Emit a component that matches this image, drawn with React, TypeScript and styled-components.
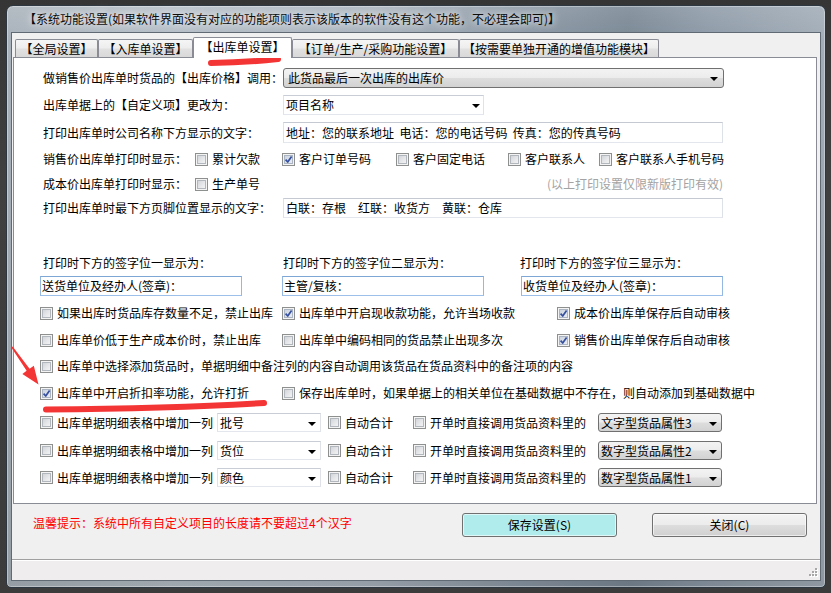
import React from "react";
import styled, { createGlobalStyle } from "styled-components";

const GlobalStyle = createGlobalStyle`
  html, body { margin: 0; padding: 0; }
  body {
    background: #3b3b3b;
    font-family: "Noto Sans CJK SC", "Noto Sans", sans-serif;
    font-size: 12px;
    color: #000;
  }
  * { box-sizing: border-box; }
`;

const Screen = styled.div`
  position: relative;
  width: 831px;
  height: 593px;
  overflow: hidden;
  background: linear-gradient(#353535, #404040 30%, #3b3b3b);
  padding: 5px 0 0 6px;
`;

const Window = styled.div`
  width: 820px;
  height: 583px;
  border-radius: 7px 7px 5px 5px;
  border: 1px solid #2d3741;
  background: linear-gradient(180deg, rgba(255, 255, 255, 0.12), rgba(0, 0, 0, 0) 6%, rgba(0, 0, 0, 0.12) 100%),
    linear-gradient(90deg, #a9b2bb 0%, #b4bdc6 20%, #a8b2bc 45%, #8c99a6 62%, #7a8895 76%, #8e9ba8 86%, #a2adb8 100%);
  box-shadow: inset 0 0 0 1px rgba(255, 255, 255, 0.35);
  padding: 0 4px 6px 4px;
  display: flex;
  flex-direction: column;
`;

const TitleBar = styled.div`
  height: 26px;
  flex: none;
  display: flex;
  align-items: center;
  padding-left: 13px;
  white-space: nowrap;
  color: #0c0c0c;
  line-height: 16px;
  text-shadow: 0 0 6px rgba(255, 255, 255, 0.9), 0 0 12px rgba(255, 255, 255, 0.6);
`;

const Client = styled.div`
  height: 549px;
  flex: none;
  border: 1px solid #5f6a75;
  background: #f0f0f0;
  display: flex;
  flex-direction: column;
`;

const TabStrip = styled.div`
  height: 24px;
  flex: none;
  display: flex;
  align-items: flex-end;
  padding-left: 3px;
`;

const Tab = styled.div<{ $w: number; $active?: boolean }>`
  width: ${(p) => p.$w}px;
  height: ${(p) => (p.$active ? 21 : 18)}px;
  margin-bottom: ${(p) => (p.$active ? -1 : 0)}px;
  position: relative;
  z-index: ${(p) => (p.$active ? 2 : 0)};
  flex: none;
  display: flex;
  align-items: center;
  justify-content: center;
  white-space: nowrap;
  line-height: 16px;
  padding-bottom: ${(p) => (p.$active ? 2 : 0)}px;
  border: 1px solid #898c95;
  border-bottom: none;
  border-radius: 2px 2px 0 0;
  background: ${(p) =>
    p.$active ? "#ffffff" : "linear-gradient(#f5f5f5, #ededed 48%, #e1e1e1 52%, #d9d9d9)"};
`;

const Panel = styled.div`
  height: 447px;
  flex: none;
  margin: 0 3px 0 1px;
  border: 1px solid #898c95;
  background: #ffffff;
  display: flex;
  flex-direction: column;
`;

const Row = styled.div<{ $mt: number; $h?: number; $pl?: number; $pr?: number }>`
  display: flex;
  align-items: center;
  flex: none;
  margin-top: ${(p) => p.$mt}px;
  height: ${(p) => p.$h ?? 20}px;
  padding-left: ${(p) => p.$pl ?? 29}px;
  padding-right: ${(p) => p.$pr ?? 0}px;
  line-height: 16px;
  white-space: nowrap;
`;

const FieldLabel = styled.span<{ $w: number }>`
  width: ${(p) => p.$w}px;
  flex: none;
  white-space: nowrap;
`;

const DropButton = styled.div<{ $w: number }>`
  width: ${(p) => p.$w}px;
  height: 100%;
  flex: none;
  display: flex;
  align-items: center;
  padding-left: 4px;
  border: 1px solid #707070;
  border-radius: 3px;
  background: linear-gradient(#f3f3f3, #ececec 48%, #dddddd 52%, #d2d2d2);
  white-space: nowrap;
`;

const Combo = styled.div<{ $w: number; $ml?: number }>`
  width: ${(p) => p.$w}px;
  height: 100%;
  flex: none;
  margin-left: ${(p) => p.$ml ?? 0}px;
  display: flex;
  align-items: center;
  padding-left: 2px;
  border: 1px solid;
  border-color: #c9ced6 #dfe3e9 #e3e7ed #dfe3e9;
  background: #ffffff;
  white-space: nowrap;
`;

const AttrCombo = styled(DropButton)<{ $ml?: number }>`
  margin-left: ${(p) => p.$ml ?? 0}px;
  padding-left: 2px;
`;

const Arrow = styled.span<{ $mr?: number }>`
  width: 0;
  height: 0;
  flex: none;
  margin-left: auto;
  margin-top: 2px;
  margin-right: ${(p) => p.$mr ?? 4}px;
  border-left: 4px solid transparent;
  border-right: 4px solid transparent;
  border-top: 4px solid #000;
`;

const TextBox = styled.div<{ $w: number; $focus?: boolean }>`
  width: ${(p) => p.$w}px;
  height: 100%;
  flex: none;
  display: flex;
  align-items: center;
  padding-left: ${(p) => (p.$focus ? 1 : 2)}px;
  border: 1px solid;
  border-color: ${(p) =>
    p.$focus ? "#7fa7d6 #93b8e3 #9cc0ea #93b8e3" : "#c5cad2 #dde2e8 #e3e7ed #dde2e8"};
  background: #ffffff;
  white-space: pre;
  overflow: hidden;
`;

const Note = styled.span`
  margin-left: auto;
  color: #a3a3a3;
`;

const SigGrid = styled.div<{ $cols: string; $mt: number; $h: number }>`
  display: grid;
  grid-template-columns: ${(p) => p.$cols};
  align-items: center;
  flex: none;
  margin-top: ${(p) => p.$mt}px;
  height: ${(p) => p.$h}px;
  padding-left: 26px;
  line-height: 16px;
  white-space: nowrap;
`;

const SigLabel = styled.span<{ $pl?: number }>`
  padding-left: ${(p) => p.$pl ?? 0}px;
`;

const CheckItem = styled.label<{ $w?: number; $ml?: number }>`
  display: flex;
  align-items: center;
  gap: 4px;
  flex: none;
  width: ${(p) => (p.$w ? `${p.$w}px` : "auto")};
  margin-left: ${(p) => p.$ml ?? 0}px;
  white-space: nowrap;
`;

const Box = styled.span<{ $checked?: boolean }>`
  width: 13px;
  height: 13px;
  flex: none;
  display: grid;
  place-items: center;
  border: 1px solid #8e8f8f;
  background: #f4f4f4;
  &::before {
    content: "";
    grid-area: 1 / 1;
    width: 9px;
    height: 9px;
    background: ${(p) =>
      p.$checked
        ? "linear-gradient(135deg, #c9d0da, #eef1f5)"
        : "linear-gradient(135deg, #cdd1d6, #e8e9eb 60%, #f6f6f6)"};
    box-shadow: inset 0 0 0 1px ${(p) => (p.$checked ? "#aab4c2" : "#b2b7be")};
  }
  svg {
    grid-area: 1 / 1;
  }
`;

const Footer = styled.div`
  height: 55px;
  flex: none;
  display: flex;
  align-items: flex-start;
  padding: 9px 13px 0 21px;
`;

const Hint = styled.span`
  margin-top: 2px;
  line-height: 16px;
  color: #ff0000;
  white-space: nowrap;
`;

const Spacer = styled.div`
  flex: 1;
`;

const Button = styled.div<{ $primary?: boolean; $mr?: number }>`
  width: 155px;
  height: 24px;
  flex: none;
  margin-right: ${(p) => p.$mr ?? 0}px;
  display: flex;
  align-items: center;
  justify-content: center;
  border: 1px solid #707070;
  border-radius: 3px;
  line-height: 16px;
  background: ${(p) =>
    p.$primary ? "#b0ecec" : "linear-gradient(#f3f3f3, #ececec 48%, #dddddd 52%, #d0d0d0)"};
  box-shadow: inset 0 0 0 1px rgba(255, 255, 255, 0.6);
`;

const StatusBar = styled.div`
  height: 21px;
  flex: none;
  border-top: 1px solid #a0a0a0;
  box-shadow: inset 0 1px 0 #ffffff;
  background: #efeded;
  display: flex;
  justify-content: flex-end;
  align-items: flex-end;
  padding: 0 2px 2px 0;
`;

const Overlay = styled.svg`
  position: absolute;
  left: 0;
  top: 0;
  width: 831px;
  height: 593px;
  pointer-events: none;
`;

const CheckMark = () => (
  <svg width="9" height="9" viewBox="0 0 9 9">
    <path d="M1.6 4.6 L3.7 7 L7.6 1.4" fill="none" stroke="#3550a0" strokeWidth="1.7" strokeLinejoin="round" />
  </svg>
);

const Check = ({
  label,
  checked,
  w,
  ml,
}: {
  label: string;
  checked?: boolean;
  w?: number;
  ml?: number;
}) => (
  <CheckItem $w={w} $ml={ml}>
    <Box $checked={checked}>{checked && <CheckMark />}</Box>
    <span>{label}</span>
  </CheckItem>
);

const tabs = [
  { label: "【全局设置】", w: 83 },
  { label: "【入库单设置】", w: 95 },
  { label: "【出库单设置】", w: 99, active: true },
  { label: "【订单/生产/采购功能设置】", w: 167 },
  { label: "【按需要单独开通的增值功能模块】", w: 200 },
];

const columnRows = [
  { col: "批号", attr: "文字型货品属性3", mt: 10 },
  { col: "货位", attr: "数字型货品属性2", mt: 9 },
  { col: "颜色", attr: "数字型货品属性1", mt: 8 },
];

const grip = [
  [8, 1],
  [5, 4],
  [8, 4],
  [2, 7],
  [5, 7],
  [8, 7],
];

export default function App() {
  return (
    <>
      <GlobalStyle />
      <Screen>
        <Window>
          <TitleBar>【系统功能设置(如果软件界面没有对应的功能项则表示该版本的软件没有这个功能，不必理会即可)】</TitleBar>
          <Client>
            <TabStrip>
              {tabs.map((t) => (
                <Tab key={t.label} $w={t.w} $active={t.active}>
                  {t.label}
                </Tab>
              ))}
            </TabStrip>
            <Panel>
              <Row $mt={10}>
                <FieldLabel $w={240}>做销售价出库单时货品的【出库价格】调用：</FieldLabel>
                <DropButton $w={441}>
                  此货品最后一次出库的出库价
                  <Arrow $mr={5} />
                </DropButton>
              </Row>
              <Row $mt={7}>
                <FieldLabel $w={240}>出库单据上的【自定义项】更改为：</FieldLabel>
                <Combo $w={201}>
                  项目名称
                  <Arrow $mr={3} />
                </Combo>
              </Row>
              <Row $mt={7} $h={21}>
                <FieldLabel $w={240}>打印出库单时公司名称下方显示的文字：</FieldLabel>
                <TextBox $w={440}>{"地址：您的联系地址  电话：您的电话号码  传真：您的传真号码"}</TextBox>
              </Row>
              <Row $mt={6}>
                <FieldLabel $w={152}>销售价出库单打印时显示：</FieldLabel>
                <Check label="累计欠款" w={87} />
                <Check label="客户订单号码" checked w={114} />
                <Check label="客户固定电话" w={112} />
                <Check label="客户联系人" w={91} />
                <Check label="客户联系人手机号码" />
              </Row>
              <Row $mt={5} $pr={93}>
                <FieldLabel $w={152}>成本价出库单打印时显示：</FieldLabel>
                <Check label="生产单号" />
                <Note>(以上打印设置仅限新版打印有效)</Note>
              </Row>
              <Row $mt={4}>
                <FieldLabel $w={240}>打印出库单时最下方页脚位置显示的文字：</FieldLabel>
                <TextBox $w={440}>{"白联：存根\u3000红联：收货方\u3000黄联：仓库"}</TextBox>
              </Row>
              <SigGrid $cols="243px 237px 202px" $mt={37} $h={16}>
                <SigLabel $pl={3}>打印时下方的签字位一显示为：</SigLabel>
                <SigLabel>打印时下方的签字位二显示为：</SigLabel>
                <SigLabel>打印时下方的签字位三显示为：</SigLabel>
              </SigGrid>
              <SigGrid $cols="242px 239px 202px" $mt={5} $h={20}>
                <TextBox $w={202} $focus>
                  送货单位及经办人(签章)：
                </TextBox>
                <TextBox $w={202} $focus>
                  主管/复核：
                </TextBox>
                <TextBox $w={202} $focus>
                  收货单位及经办人(签章)：
                </TextBox>
              </SigGrid>
              <Row $mt={7} $pl={26}>
                <Check label="如果出库时货品库存数量不足，禁止出库" w={242} />
                <Check label="出库单中开启现收款功能，允许当场收款" checked w={275} />
                <Check label="成本价出库单保存后自动审核" checked />
              </Row>
              <Row $mt={7} $pl={26}>
                <Check label="出库单价低于生产成本价时，禁止出库" w={242} />
                <Check label="出库单中编码相同的货品禁止出现多次" w={275} />
                <Check label="销售价出库单保存后自动审核" checked />
              </Row>
              <Row $mt={6} $pl={26}>
                <Check label="出库单中选择添加货品时，单据明细中备注列的内容自动调用该货品在货品资料中的备注项的内容" />
              </Row>
              <Row $mt={7} $pl={26}>
                <Check label="出库单中开启折扣率功能，允许打折" checked w={242} />
                <Check label="保存出库单时，如果单据上的相关单位在基础数据中不存在，则自动添加到基础数据中" />
              </Row>
              {columnRows.map((r) => (
                <Row key={r.col} $mt={r.mt} $h={19} $pl={26}>
                  <Check label="出库单据明细表格中增加一列" w={177} />
                  <Combo $w={104}>
                    {r.col}
                    <Arrow />
                  </Combo>
                  <Check label="自动合计" w={85} ml={7} />
                  <Check label="开单时直接调用货品资料里的" w={185} />
                  <AttrCombo $w={124}>
                    {r.attr}
                    <Arrow />
                  </AttrCombo>
                </Row>
              ))}
            </Panel>
            <Footer>
              <Hint>温馨提示：系统中所有自定义项目的长度请不要超过4个汉字</Hint>
              <Spacer />
              <Button $primary $mr={35}>
                保存设置(S)
              </Button>
              <Button>关闭(C)</Button>
            </Footer>
            <StatusBar>
              <svg width="11" height="11" viewBox="0 0 11 11">
                {grip.map(([x, y]) => (
                  <g key={`${x}-${y}`}>
                    <rect x={x + 1} y={y + 1} width="2" height="2" fill="#ffffff" />
                    <rect x={x} y={y} width="2" height="2" fill="#a7a7a7" />
                  </g>
                ))}
              </svg>
            </StatusBar>
          </Client>
        </Window>
        <Overlay viewBox="0 0 831 593">
          <path d="M211 63 Q245 62.5 278 59" fill="none" stroke="#f43535" strokeWidth="6" strokeLinecap="round" />
          <path d="M46 409.5 C120 409, 200 407, 264 403" fill="none" stroke="#f43535" strokeWidth="6" strokeLinecap="round" />
          <polygon
            points="12.65,346.5 29.6,368.8 33.8,365.8 38.5,384.5 22.4,373.9 26.6,370.8 11.35,347.5"
            fill="#f43535"
          />
        </Overlay>
      </Screen>
    </>
  );
}
